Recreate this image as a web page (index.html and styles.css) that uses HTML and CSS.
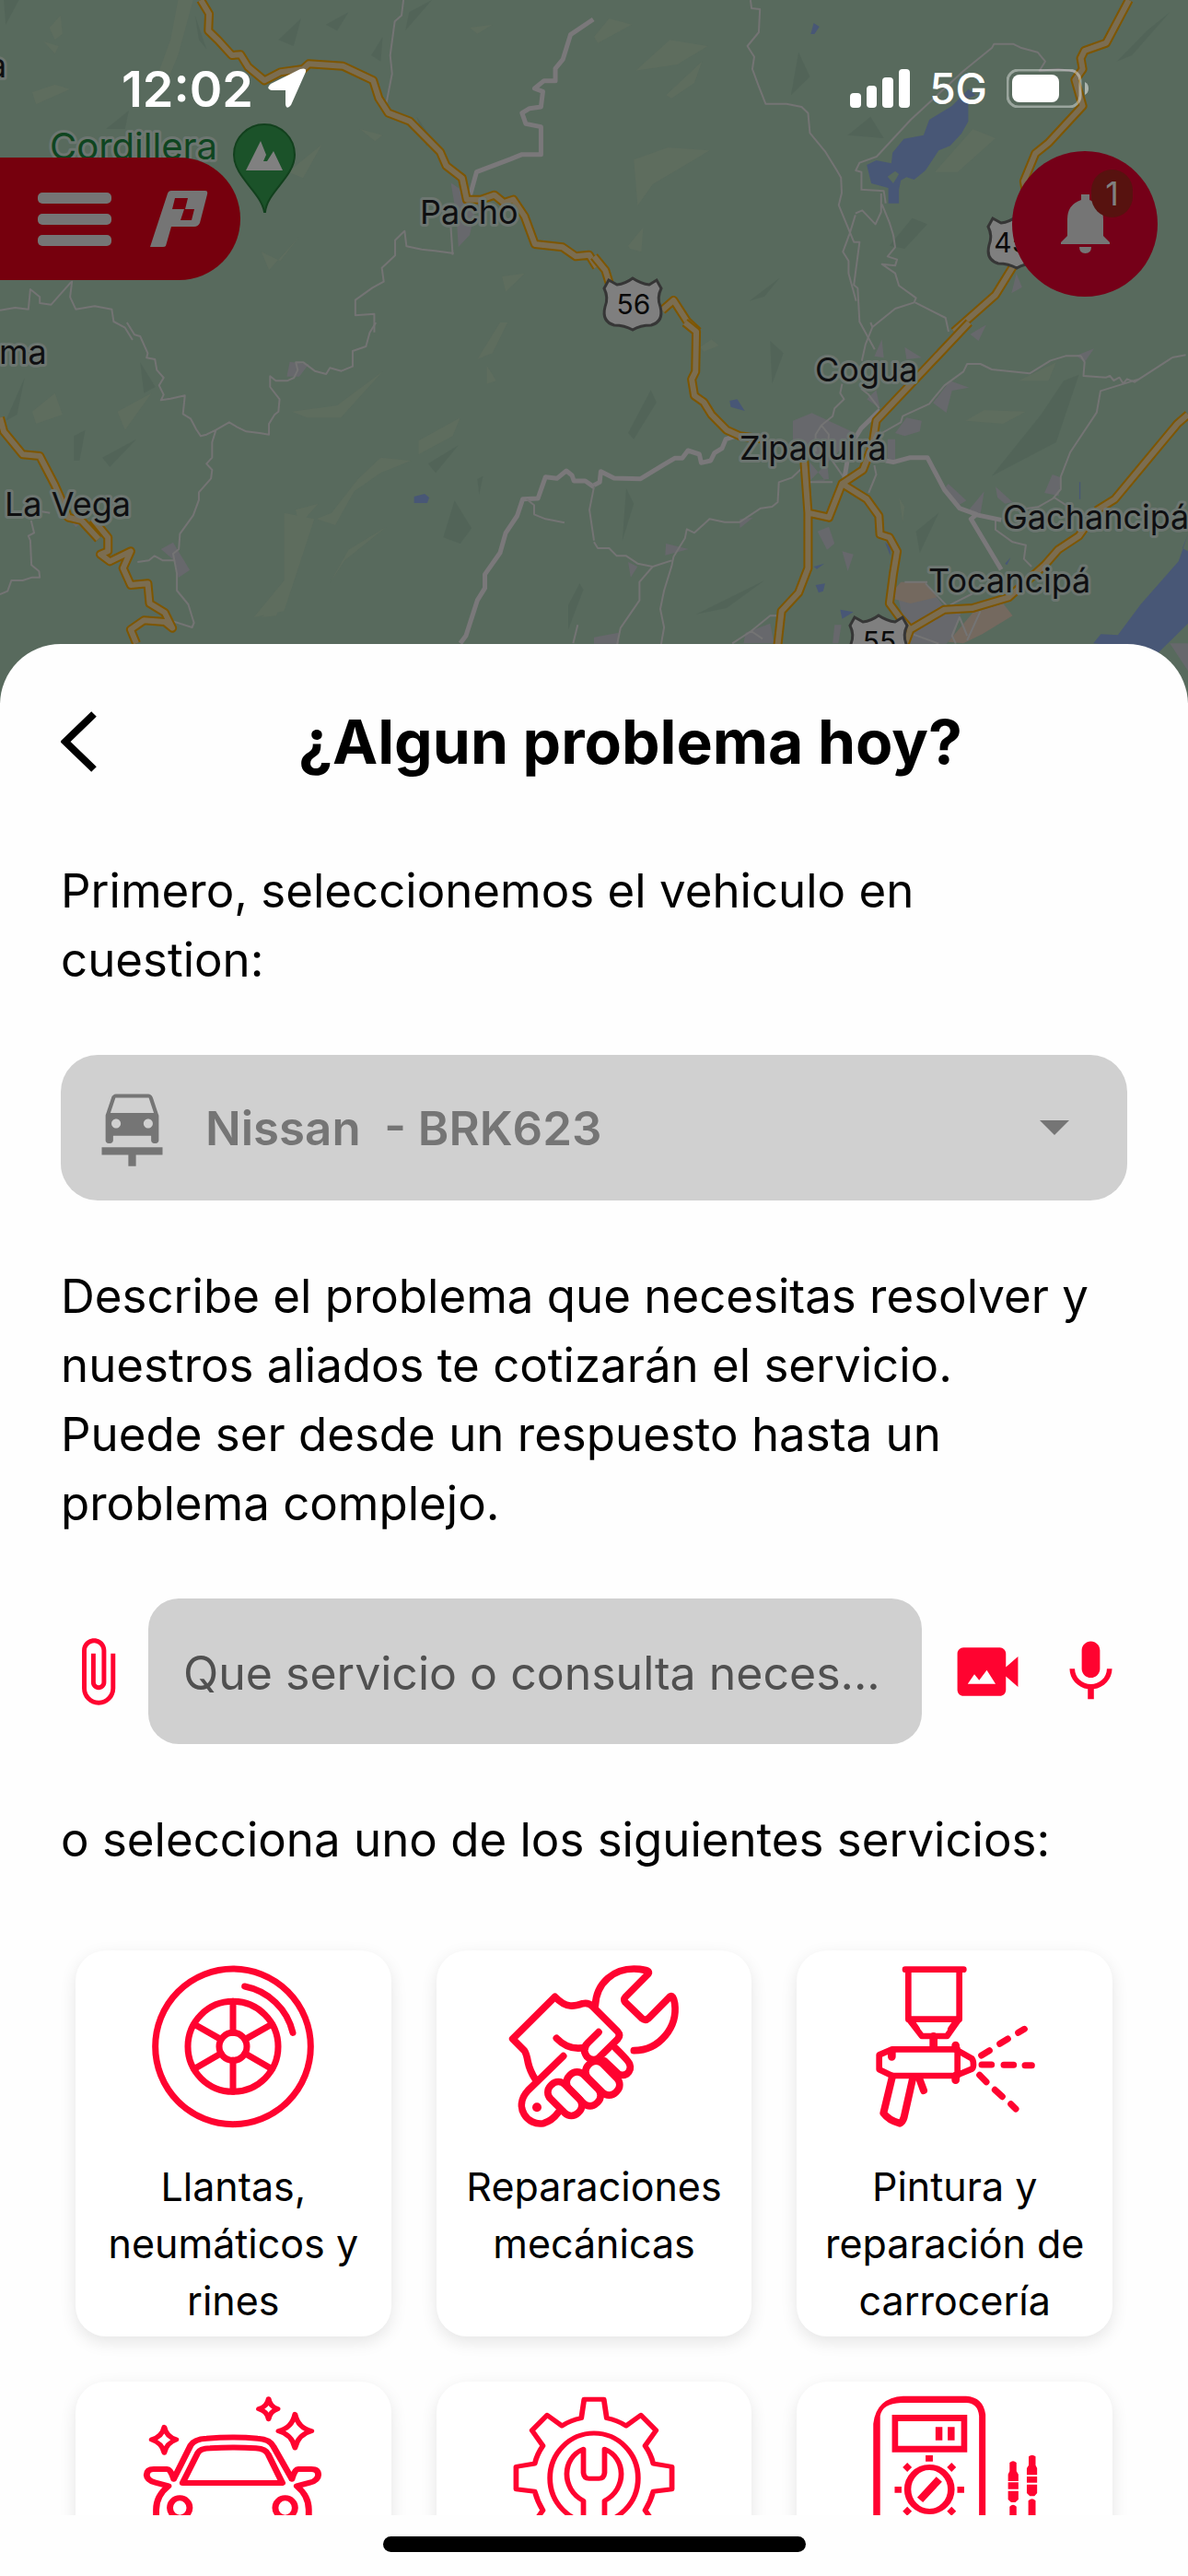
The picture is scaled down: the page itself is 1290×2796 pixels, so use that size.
FILE: index.html
```html
<!DOCTYPE html>
<html lang="es">
<head>
<meta charset="utf-8">
<meta name="viewport" content="width=device-width, initial-scale=1">
<title>¿Algun problema hoy?</title>
<link rel="stylesheet" href="styles.css">
</head>
<body>
<div class="app">
  <header class="hero">
    <svg class="map" viewBox="0 0 1290 765" preserveAspectRatio="xMidYMin slice" aria-hidden="true">
      <rect class="land" width="1290" height="765"/>
      <!-- north-west -->
      <g transform="scale(.41135 .33333)">
        <path class="hill-light" d="M470 0h40l-40 180-20 60-30-10 30-100zM115 135l40 15-10 25zM130 90l30-40 5 60-20 20zM85 300l60-25 40 15-90 50zM1325 900l60-10-50 60zM1240 90l60-10-40 30zM760 560l90-90-50 110zM690 820l50 30 50-80-80 110zM950 420l60 20-20 20z"/>
        <path class="hill-dark" d="M10 0h40l-35 80zM515 50l30 110-20-30zM735 130l60-70-20 90zM980 180l30-60-5 80zM1080 40l60-40-70 100zM1100 380l50 90-25 5zM280 420l60-60-10 60zM860 80l60-40-30 60z"/>
        <path class="town" d="M1190 595l70 60-20 110-30 40-5-100z"/>
        <path class="minor" d="M1065 0l-5 50-18 20-12 110 5 60-15 95M0 1010l40-8 35 5 5-65 25 25v20l30 5 50-70 5-5-5 50 15 40 50-10 45 10 5 40 30 20 20 40M1195 830l-5-90M1198 825l-50-8-35-5-40-10-5-50-25 30v50l-35 40 5 45-30 20-45 40v50l50-5v60"/>
        <path class="major" d="M1240 640l18-80 90-42 30-15 50 0v-90l-40-10-10-35 20-15 30-5 5-50-22-10 25-25h30v-40l20-30 20-80 60-50"/>
        <path class="hw" d="M530 0l22 45-2 55 25 30 37 50 23-2 20 40 43 44 42-27 60-10 15-17 90 7 80 47 15 58 25 48 57 27 80 100 16 45 42 40 12 70 38 0 35-15 25 25 25-10 30 55 27 90 73 10 35 30 35-5 20 40"/>
        <path class="hw-in" d="M530 0l22 45-2 55 25 30 37 50 23-2 20 40 43 44 42-27 60-10 15-17 90 7 80 47 15 58 25 48 57 27 80 100 16 45 42 40 12 70 38 0 35-15 25 25 25-10 30 55 27 90 73 10 35 30 35-5 20 40"/>
      </g>
      <!-- north-east -->
      <g transform="translate(645 0) scale(.41135 .33333)">
        <path class="hill-light" d="M190 310l95-110-20 70-60 50zM105 520l90-40 110 10-150 110-40 70zM90 800l40-60-5 80-30-10zM0 120l40-60 60 20-90 60zM900 560l100-140 60 30-100 110zM110 230l90-100 100 20-80 60z"/>
        <path class="hill-dark" d="M540 170l30 80-50 60zM670 440l60-60 35 70zM410 980l80-75-40 60zM780 800l60-90 40 20-60 80zM1380 200l80-100 60-60-100 140z"/>
        <path class="water" d="M580 75l15 12-13 24h-10zM988 290l20 20-20 10v75l-18 40-30 40-30 15-35 65-30 30-20-8-15 10-5 30v45h-28v-50l-45-15-12-60 25-15 40 10 3-35 30-45 52-12 15-50 60-45 40-50z"/>
        <path class="land" d="M775 575l20-18 10 10-15 30z"/>
        <path class="minor" d="M413 0l3 27 22 3-3 75-30 45 18 35-5 40 15 50 20 63h55l40 10 17 20 5 65 40 60 30 60 12 25 2 50-8 40 20 60 20 60 15 0-15 140 10 10 5 110 40 90M706 620v-60l-15-5 10-25 45-20 90-120 140-160 75-75 5-12h50l20 12 45 15 20 30-15 30 50-5 50 10M770 662l-5-40-60-5M760 665l20 60 10 40 5 40-20 30 25 10-5 20-35-5 35 30 10 40 45 40-5 15-50 20-60 60M848 985l80 50 8 45M690 695l18-10 35 45 15-40v-60M690 700l-15 60-18 60 15 30 0 40 20 90"/>
        <path class="town" d="M1115 890l15 45-28 20zM1035 1058l-30 22h15z"/>
        <path class="hw" d="M0 835l30 45 20 80M180 1010l30-32 35 67 30 35M1412 0l-60 140-57 25-10 25 5 35-20 35 20 85-90 120-35 35-30 90 15 110-40 160-50 100-110 120"/>
        <path class="hw-in" d="M0 835l30 45 20 80M180 1010l30-32 35 67 30 35M1412 0l-60 140-57 25-10 25 5 35-20 35 20 85-90 120-35 35-30 90 15 110-40 160-50 100-110 120"/>
      </g>
      <!-- south-west -->
      <g transform="translate(0 350) scale(.41135 .33333)">
        <path class="hill-light" d="M85 290l60-60 20 70-70 30zM310 290l90-60-70 120zM770 290l120-20 120-110-110 150-90 0zM1105 385l110-75-20 60-90 60zM945 510l60-70 80 10-80 40-70 60-50 110-50-20 40-20zM780 610l60-20-50 70zM1285 140l25 50-25 10zM690 960l50-45-10 40zM1260 120l60-120h20l-40 100zM750 620l80 20-80 300-80 20 80-120zM870 850l50-110 100-75-110 110z"/>
        <path class="hill-dark" d="M195 370l30-20-15 100-15 0zM270 440l90-60-70 90zM1130 460l80-60-60 90zM1260 510l15-10-10 60zM1500 920l30-70 10 20-40 130zM1170 700l30-120 45 90-30 50zM370 130l40 80-30 20zM15 320l50-140-20 120z"/>
        <path class="town" d="M765 128l50 8-25 40-33 0zM425 738l32-22 44 90-30 25-10-55zM190 650l22 5-12 12z"/>
        <path class="water" d="M1093 567l28-9 12 12-5 18h-35z"/>
        <path class="minor" d="M335 0l20 40 15 5 20 55-3 15 22 5 5 35 18 25-12 25 12 30-7 18 25-5 38-10-5 60 20 15 15 35 12 22 15-5 25-15 35-25 20 15 25 15 35 5 25 5 0-35 15-30 10-10 3-40-25-40v-35l15 15h30l18-10 10-25-5-25 20 0 30 28 30 10 10-20 30 10 30-15v-50l35-15 10-45 15-30V0M570 350l-10 40v50l-15 20 15 20-3 28-32 45v25l-15 50-35 60-3 50-15 15 10 65 0 55 30 45 15 60-5 15-50-20v25M460 775l-30 0-22-15-15 15-30 5M0 885l20-10 10-35h30l25-10 20 0-2-20-20-20-3-80-5-15 15-10-8-40M82 610l50 10"/>
        <path class="major" d="M1215 1045l15-25 30-115 20-40v-45l40-70 15-65 30-55 15-55 40-2 20-70 30 5 25-25 15 15 5 18h30l23 20"/>
        <path class="minor" d="M1390 575l20 20v30l30 15 50 12M1568 535l-12 75 12 100M1525 985l-12 60"/>
        <path class="hw" d="M0 310l10 45 50 75 45 5 40 95 25 70 10 35 35 10 45 60M245 640l40 60v45l-20 10 25 23 55-33-20 55 20 55 45-5 5 65 40 30 20 50-20-20-55-5-35 30 15 45"/>
        <path class="hw-in" d="M0 310l10 45 50 75 45 5 40 95 25 70 10 35 35 10 45 60M245 640l40 60v45l-20 10 25 23 55-33-20 55 20 55 45-5 5 65 40 30 20 50-20-20-55-5-35 30 15 45"/>
      </g>
      <!-- south-east -->
      <g transform="translate(645 350) scale(.41135 .33333)">
        <path class="hill-light" d="M980 320l50-35 110 5-60 40zM1120 190l100-60-20 60zM280 80l30-25 20 20-40 20zM805 570l15 30-5 50z"/>
        <path class="hill-dark" d="M465 60l35 40-30 100zM150 220l15 40-60 120-15-20zM85 540l20 50-30 120zM270 950l180-110-100 90zM1180 300l60-110 40-20-60 220-170 110zM850 680l60-60-50 130z"/>
        <path class="town" d="M525 320l50-25 105 60-30 60-80 100 50-5-5-60-90-40zM820 80l45 35-40 5zM760 55l5 60-25-5zM1035 8l-20 52-22-22zM720 250l25-30 10 60zM895 262l45-72 50 22-45 10-15 72zM795 360l30-50 40 10-5 35-40 15zM775 380h20v80l-20-20zM1320 85l-25 45-22-22zM935 525l48 55-20 15-40-50zM1030 550l-10 75-30-15zM1060 535l45 50-20 5-20-20zM1210 495l22 10-5 60-38-10zM590 680l30-15 15 55-20 20zM655 745l30 10-15 55zM190 720l60 18-62 20zM385 640l35-5-35 35zM90 780l25 15-18 35zM570 455l40 60-40 0zM0 1025l65-15v36H0zM400 1010l65-30 10 65h-80zM635 985l18 0-8 60h-15zM800 880l75-35 45 75 50 20-20 80-20 26h-100zM1520 1045h48v90z"/>
        <path class="sand" d="M810 845h65l30 50-70 20-60-20zM1000 945l80-30 25 40-80 60-50 30-40-5z"/>
        <path class="water" d="M358 255l20-5 20 38-37-13zM580 795l28-10-20 18zM585 855l25-5-5 25-12 5zM650 935l35 8-30 22zM768 715l14 15v30zM1085 785l15-20-10 25zM1568 690l-15 45 15 10v235l-78 95-92-20-80-10 20-30 45 3 60-100 100-140zM1281 520h3v55h-3z"/>
        <path class="minor" d="M730 0l5 15-18 55-10 55M655 200l-5 30 10 20-25 30-5 25-30 30-15 30v55M705 215l20 20 28 45M600 335l20 30-5 60 50 90M760 360l50-35 5-20 70-40 40-60 50-45 10-25h35l30 18 100 13 55-42 40-15h40l10 20-3 45 60 5 10-5 10 15 15-10 10 20 10-15 20 10 100-80 35-8M1437 185l-100 38-10 70-70 130-25 80v40l-20 30-40 28-60 10M1215 570l50 40M740 465l5 30-20 60M553 470l-30 35-35 15-3 65-15 15-30 5-55 45h-40l-40-10-40 45-20-12-5 30-30 60-5 30-20 80-10 60 10 60-10 70M0 715l10 20h30l20 25h25l30 25 40 10-35 50v60l-50 90-10 60M155 795l50-20M485 955h-20l-50 50-50 40M415 1005l30 25M875 850l70 90M820 845h60M570 520h60M1060 640v35l45 40 35 10-5 45 20 25M830 1010l80 36M985 1020l-20-60-20 60 10 26M1020 940l-35 95M940 920l80-50"/>
        <path class="major" d="M0 530l15-10 3-35 35 22 70 2 60-45 30-22 20 0 15-25 30 12 5 28 25-7 10-25 20-15 10-30 25-10M755 285l-50 60-30 60-15 110M770 450l20 5 45-15h45l45 105 40 60 45 20-15 15 80 165M1005 625l70 18"/>
        <path class="hw" d="M240 0l30 30-2 130-10 25 7 53 25 22 20 40 40 50 35 20 65 10M990 0L745 320l-10 80-25 80-55 45-35 110-55-15M555 450l10 170v180l-25 80-45 60-10 110M655 525l65 50 32 55 3 60 25 10 20 45-10 75-10 95 30 50 25 35 90-65 75-5 95-35 95-105 35-50 55-45 50-85 45-35 165-245 28-30M835 1000l-15 50"/>
        <path class="hw-in" d="M240 0l30 30-2 130-10 25 7 53 25 22 20 40 40 50 35 20 65 10M990 0L745 320l-10 80-25 80-55 45-35 110-55-15M555 450l10 170v180l-25 80-45 60-10 110M655 525l65 50 32 55 3 60 25 10 20 45-10 75-10 95 30 50 25 35 90-65 75-5 95-35 95-105 35-50 55-45 50-85 45-35 165-245 28-30M835 1000l-15 50"/>
      </g>
      <!-- park pin -->
      <path d="M287 230C283 208 254 192 254 168a33 33 0 0 1 66 0c0 24-30 40-32 62z" fill="#1b5229" stroke="#12401d" stroke-width="2"/>
      <path d="M267 185l16-32 6 15-3 7h4l7-11 10 21z" fill="#808080"/>
      <!-- route shields -->
      <g class="shield">
        <path d="M661 304l9 5q9-1 17-7 9 6 18 7l8-5 5 9q-5 10-1 20 4 16-10 20-12 0-20 5-9-5-20-5-14-4-10-20 4-10-1-20z"/>
        <path d="M1078 237l9 5q9-1 17-7 9 6 18 7l8-5 5 9q-5 10-1 20 4 16-10 20-12 0-20 5-9-5-20-5-14-4-10-20 4-10-1-20z"/>
        <path d="M928 670l9 5q9-1 17-7 9 6 18 7l8-5 5 9q-5 10-1 20 4 16-10 20-12 0-20 5-9-5-20-5-14-4-10-20 4-10-1-20z"/>
      </g>
      <g class="route-no">
        <text x="688" y="341">56</text>
        <text x="1098" y="274">45</text>
        <text x="955" y="707">55</text>
      </g>
      <g class="place">
        <text x="-13" y="84">a</text>
        <text x="-1" y="395">ma</text>
        <text x="5" y="560">La Vega</text>
        <text x="456" y="243">Pacho</text>
        <text x="885" y="414">Cogua</text>
        <text x="803" y="499">Zipaquirá</text>
        <text x="1089" y="574">Gachancipá</text>
        <text x="1008" y="643">Tocancipá</text>
        <text class="park" x="54" y="173">Cordillera</text>
      </g>
    </svg>
    <div class="status">
      <div class="clock">
        <span>12:02</span>
        <svg width="44" height="44" viewBox="0 0 44 44" aria-hidden="true"><path d="M43 4L27 40Q22 46 21 39V24H6Q-1 22 5 17L37 1Q44-1 43 4z" fill="#fff"/></svg>
      </div>
      <div class="signals">
        <svg width="65" height="42" viewBox="0 0 65 42" fill="#fff" aria-hidden="true"><rect y="26" width="12" height="16" rx="4"/><rect x="18" y="18" width="11" height="24" rx="4"/><rect x="35" y="9" width="12" height="33" rx="4"/><rect x="53" width="12" height="42" rx="4"/></svg>
        <span>5G</span>
        <svg width="90" height="42" viewBox="0 0 90 42" aria-hidden="true"><rect x="1" y="1" width="79" height="40" rx="12" fill="none" stroke="#fff" stroke-opacity=".4" stroke-width="3"/><rect x="6" y="6" width="51" height="30" rx="8" fill="#fff"/><path d="M85 14q4 2 4 7t-4 7z" fill="#fff" opacity=".5"/></svg>
      </div>
    </div>
    <div class="toolbar">
      <button class="menu" type="button" aria-label="Menú">
        <svg width="80" height="58" viewBox="0 0 80 58" fill="#757575" aria-hidden="true"><rect width="80" height="12" rx="5"/><rect y="23" width="80" height="12" rx="5"/><rect y="46" width="80" height="12" rx="5"/></svg>
        <svg width="63" height="61" viewBox="0 0 63 61" aria-hidden="true"><path d="M19 3Q20 0 23 0H60Q63 0 62 4L54 35Q52 39 48 39H23L17 60Q16 61 14 61H0z" fill="#757575"/><path d="M27 8h14l-3 12h10l-3 12H33l4-12H24z" fill="#76000d"/></svg>
      </button>
      <button class="bell" type="button" aria-label="Notificaciones">
        <svg width="53" height="64" viewBox="0 0 53 64" fill="#757575" aria-hidden="true"><path d="M22 0h9v6q15 5 15 21v18l7 7v2H0v-2l7-7V27Q7 11 22 6zM20 57h13q0 7-6.500 7T20 57z"/></svg>
        <span class="badge">1</span>
      </button>
    </div>
  </header>

  <main class="sheet">
    <div class="title-row">
      <button class="back" type="button" aria-label="Atrás">
        <svg width="40" height="66" viewBox="0 0 40 66" aria-hidden="true"><path d="M36 3L5 33l31 30" fill="none" stroke="#000" stroke-width="8"/></svg>
      </button>
      <h1>¿Algun problema hoy?</h1>
    </div>

    <label class="copy" for="vehicle">Primero, seleccionemos el vehiculo en cuestion:</label>
    <div class="picker">
      <svg width="99" height="99" viewBox="0 0 24 24" fill="#757575" aria-hidden="true"><path fill-rule="evenodd" d="M16.220 12c.68 0 1.220-.54 1.220-1.220 0-.67-.54-1.220-1.220-1.220S15 10.110 15 10.780c0 .68.55 1.220 1.220 1.220zM6.560 10.780c0 .67.54 1.220 1.220 1.220S9 11.460 9 10.780c0-.67-.54-1.220-1.220-1.220s-1.220.55-1.220 1.220zM7.610 4L6.280 8h11.430l-1.330-4H7.610zM16.280 3s.54.01.92.54c.02.02.03.04.05.07.07.11.14.24.19.4.22.65 1.560 4.680 1.560 4.680v6.500c0 .45-.35.81-.78.81h-.44c-.43 0-.78-.36-.78-.81V14H7v1.190c0 .45-.35.81-.78.81h-.44c-.43 0-.78-.36-.78-.81v-6.500s1.340-4.020 1.550-4.690c.05-.16.12-.28.19-.4.03-.02.04-.04.06-.06C7.180 3.010 7.720 3 7.720 3h8.560zM4 17.010h16V19h-7v3h-2v-3H4v-1.990z"/></svg>
      <select id="vehicle">
        <option>Nissan &nbsp;- BRK623</option>
      </select>
      <svg class="caret" width="32" height="16" viewBox="0 0 32 16" aria-hidden="true"><path d="M0 0h32L16 16z" fill="#757575"/></svg>
    </div>

    <label class="copy" for="query">Describe el problema que necesitas resolver y nuestros aliados te cotizarán el servicio.<br>Puede ser desde un respuesto hasta un<br>problema complejo.</label>
    <div class="ask">
      <button class="tool" type="button" aria-label="Adjuntar archivo">
        <svg viewBox="0 0 24 24" aria-hidden="true"><path d="M16.500 6v11.500c0 2.210-1.790 4-4 4s-4-1.790-4-4V5c0-1.380 1.120-2.500 2.500-2.500s2.500 1.120 2.500 2.500v10.500c0 .55-.45 1-1 1s-1-.45-1-1V6H10v9.500c0 1.380 1.120 2.500 2.500 2.500s2.500-1.120 2.500-2.500V5c0-2.210-1.790-4-4-4S7 2.790 7 5v12.500c0 3.040 2.460 5.500 5.500 5.500s5.500-2.460 5.500-5.500V6h-1.500z"/></svg>
      </button>
      <input id="query" type="text" placeholder="Que servicio o consulta neces...">
      <div class="capture">
        <button class="tool" type="button" aria-label="Grabar video">
          <svg viewBox="0 0 24 24" aria-hidden="true"><path fill-rule="evenodd" d="M18 10.500V6c0-1.100-.9-2-2-2H4c-1.100 0-2 .9-2 2v12c0 1.100.9 2 2 2h12c1.100 0 2-.9 2-2v-4.500l4 3.500V7l-4 3.500zM5.400 16l2.200-3.200 1.600 2 2.500-3.300 2.900 4.500H5.400z"/></svg>
        </button>
        <button class="tool" type="button" aria-label="Grabar audio">
          <svg viewBox="0 0 24 24" aria-hidden="true"><path d="M12 14c1.660 0 3-1.340 3-3V5c0-1.660-1.340-3-3-3S9 3.340 9 5v6c0 1.660 1.340 3 3 3zm5.300-3c0 3-2.540 5.100-5.300 5.100S6.700 14 6.700 11H5c0 3.410 2.720 6.230 6 6.720V21h2v-3.280c3.280-.48 6-3.300 6-6.720h-1.700z"/></svg>
        </button>
      </div>
    </div>

    <p class="copy">o selecciona uno de los siguientes servicios:</p>

    <div class="services">
      <button class="card" type="button">
        <svg class="art" viewBox="280 130 600 528" aria-hidden="true">
          <g stroke-width="21"><circle cx="580" cy="395" r="253"/><circle cx="580" cy="395" r="147"/><circle cx="580" cy="395" r="45"/><path d="M580 248v102M580 440v102M453 322l88 50M619 417l88 51M707 322l-88 50M541 417l-88 51"/><path d="M618 199A200 200 0 0 1 775 350"/></g>
        </svg>
        <span>Llantas, neumáticos y rines</span>
      </button>
      <button class="card" type="button">
        <svg class="art" viewBox="255 130 600 528" aria-hidden="true">
          <g stroke-width="23"><path d="M559 262C562 190 618 134 704 143Q740 147 732 158L657 234Q650 242 657 251L712 304Q723 312 733 303L803 232Q813 226 818 255C828 330 770 408 685 408"/><path d="M548 262L632 346Q643 358 632 371L572 430Q552 448 532 428Q514 404 535 383L570 348"/><path d="M290 370L428 233C465 272 492 264 518 255Q536 251 548 262M433 368C462 398 494 405 526 398M290 370L328 408Q335 418 340 446 346 474 364 502M455 426L340 538C290 592 340 655 390 645Q418 638 440 608"/>
          <rect x="397" y="532" width="126" height="66" rx="30" transform="rotate(45 460 565)"/><rect x="458" y="500" width="126" height="66" rx="30" transform="rotate(45 521 533)"/><rect x="520" y="465" width="126" height="66" rx="30" transform="rotate(45 583 498)"/><path d="M590 442L632 482Q645 493 662 484 678 470 671 452 668 442 625 400"/></g><circle class="solid" cx="369" cy="593" r="15"/>
        </svg>
        <span>Reparaciones mecánicas</span>
      </button>
      <button class="card" type="button">
        <svg class="art" viewBox="290 130 600 528" aria-hidden="true">
          <g stroke-width="20"><path d="M428 144H618M438 150V304L482 361H564L604 304V150M438 306H604M448 312l18 26M594 312l-18 26" /><path d="M520 362v36" stroke-width="26"/><path d="M385 404H592L645 434Q650 440 650 454 650 464 645 468L592 490H385L343 470V422zM598 404v86"/><path d="M592 391v10M592 490v14M384 410v18" stroke-width="26"/><path d="M386 492L357 612Q375 636 410 645 420 640 424 625L452 500M474 500l14 38" stroke-width="24"/></g>
          <g stroke-width="21"><path d="M676 424l26-16M736 386l26-16M796 350l20-12M677 454h32M749 455h32M818 456h22M670 488l22 22M720 536l24 22M772 582l16 16"/></g>
        </svg>
        <span>Pintura y reparación de carrocería</span>
      </button>
      <button class="card" type="button" aria-label="Lavado">
        <svg class="art" viewBox="0 0 600 528" aria-hidden="true">
          <g transform="translate(300 0) scale(1.148 1) translate(-505 -126)" stroke-width="18">
            <path d="M606 134Q610 160 632 167 610 175 606 200 602 175 578 167 602 160 606 134zM681 184Q690 230 728 239 690 250 681 294 672 250 634 239 672 230 681 184zM310 226Q316 258 344 267 316 278 310 310 304 278 274 267 304 258 310 226z" stroke-width="15"/>
            <path d="M337 395L385 285Q395 265 430 263 505 256 575 263 610 265 620 290L672 395M362 408L405 310Q412 296 440 295 505 290 570 295 598 297 605 315L645 408zM337 395Q328 363 318 363H280Q261 363 260 382 261 400 285 407L322 418Q287 450 287 495V530M672 395Q680 363 690 363H727Q747 363 747 382 746 400 723 407L686 418Q720 450 720 495V530"/>
            <ellipse cx="354" cy="489" rx="28" ry="32"/><ellipse cx="653" cy="489" rx="28" ry="32"/>
          </g>
        </svg>
      </button>
      <button class="card" type="button" aria-label="Mantenimiento">
        <svg class="art" viewBox="0 0 600 528" aria-hidden="true">
          <g transform="translate(300 0) scale(1.148 1) translate(-1528 -126)" stroke-width="15">
            <path d="M1500 136H1556L1564 197Q1593 203 1619 222L1661 187 1704 237 1673 287Q1690 315 1696 345L1749 355V428L1696 436Q1688 470 1673 497L1704 547 1661 597 1619 562 1564 587 1556 648H1500L1492 587 1437 562 1395 597 1352 547 1383 497Q1368 470 1360 436L1307 428V355L1360 345Q1366 315 1383 287L1352 237 1395 187 1437 222Q1463 203 1492 197z"/>
            <ellipse cx="1528" cy="392" rx="125" ry="146"/>
            <path d="M1498 520V466C1434 428 1436 326 1498 298V375Q1500 394 1514 394H1542Q1556 394 1558 375V298C1620 326 1622 428 1558 466V520"/>
          </g>
        </svg>
      </button>
      <button class="card" type="button" aria-label="Diagnóstico">
        <svg class="art" viewBox="0 0 600 528" aria-hidden="true">
          <g transform="translate(300 0) scale(1.244 1) translate(-956 -126)">
            <path class="solid" fill-rule="evenodd" d="M742 540V215Q750 130 820 125H985Q1030 128 1036 185V540H1019V190Q1016 148 985 147H815Q765 150 760 190V540zM791 186H988V308H791zM807 207V287H972V207z"/>
            <path class="solid" d="M905 226h18v43h-18zM937 226h18v43h-18zM879 318h19v20h-19zM798 420h18v20h-18zM962 420h18v20h-18zM831 342l12 15-12 15-12-15zM947 342l12 15-12 15-12-15zM831 485l12 15-12 15-12-15zM947 485l12 15-12 15-12-15zM857 455l50-67 15 16-50 67zM1099 370V342q9-10 18 0V370l5 10V402h-27V380zM1095 406h27v22h-27zM1095 434h27v28l-8 9h-11l-8-9zM1099 540V485q9-12 18 0v55zM1149 350V322q9-10 18 0V350l4 10V382h-27V360zM1144 387h27v20h-27zM1144 413h27v28l-7 10h-12l-8-10zM1148 540V466q10-12 19 0v74z"/>
            <ellipse cx="889" cy="429" rx="57" ry="72" stroke-width="18"/>
          </g>
        </svg>
      </button>
    </div>
    <div class="home"></div>
  </main>
</div>
</body>
</html>
```
FILE: styles.css
```css
* { box-sizing: border-box; }

body {
  margin: 0;
  background: #fefefe;
  color: #000;
  font-family: Inter, "Liberation Sans", sans-serif;
}

button, select, input {
  margin: 0;
  padding: 0;
  border: 0;
  background: none;
  color: inherit;
  font: inherit;
}

svg { display: block; flex: none; }

.app {
  display: flex;
  flex-direction: column;
  height: 100vh;
}

/* Map header */
.hero {
  position: relative;
  flex: none;
  height: 765px;
  overflow: hidden;
}

.map {
  position: absolute;
  inset: 0;
  width: 100%;
  height: 100%;
}

.map path { vector-effect: non-scaling-stroke; }
.land { fill: #586a5d; }
.hill-light { fill: #64705f; opacity: .5; }
.hill-dark { fill: #506357; opacity: .7; }
.town { fill: #67686c; }
.sand { fill: #74695f; }
.water { fill: #485776; }
.minor, .major, .hw, .hw-in {
  fill: none;
  stroke: #747474;
  stroke-width: 2;
  stroke-linejoin: round;
}
.major { stroke: #7a787a; stroke-width: 5; }
.hw { stroke: #7e5600; stroke-width: 10; }
.hw-in { stroke: #7b6d51; stroke-width: 6; }

.shield path {
  fill: #7f7f7f;
  stroke: #363636;
  stroke-width: 3;
}

.route-no {
  font-size: 30px;
  text-anchor: middle;
  fill: #0a0a0a;
}

.place {
  font-size: 36px;
  font-weight: 400;
  fill: #0f0f11;
  stroke: #6d7671;
  stroke-width: 6px;
  stroke-linejoin: round;
  paint-order: stroke;
}
.park { fill: #0f4520; font-size: 40px; }

.status, .toolbar {
  position: relative;
  display: flex;
  justify-content: space-between;
}

.status {
  align-items: center;
  height: 164px;
  padding: 28px 107px 0 132px;
  color: #fff;
}

.clock, .signals {
  display: flex;
  align-items: center;
}
.clock { gap: 14px; font-size: 54px; font-weight: 600; }
.signals { gap: 21px; font-size: 46px; font-weight: 500; }

.menu {
  display: flex;
  align-items: center;
  gap: 42px;
  width: 261px;
  height: 133px;
  margin-top: 7px;
  padding-left: 41px;
  border-radius: 0 67px 67px 0;
  background: #76000d;
}

.bell {
  position: relative;
  display: flex;
  align-items: center;
  justify-content: center;
  width: 158px;
  height: 158px;
  margin-right: 33px;
  border-radius: 50%;
  background: #750018;
}

.badge {
  position: absolute;
  top: 20px;
  right: 27px;
  width: 45px;
  border-radius: 24px;
  background: #57120f;
  color: #808080;
  font-size: 36px;
  line-height: 52px;
}

/* Bottom sheet */
.sheet {
  position: relative;
  display: flex;
  flex: 1;
  flex-direction: column;
  min-height: 0;
  margin-top: -66px;
  padding: 66px 66px 26px;
  border-radius: 66px 66px 0 0;
  background: #fefefe;
}

.title-row {
  display: flex;
  align-items: center;
  height: 80px;
  margin-bottom: 84px;
}

.back { width: 79px; }

h1 {
  flex: 1;
  margin: 0;
  font-size: 66px;
  font-weight: 700;
  text-align: center;
}

.copy {
  display: block;
  margin: 0;
  font-size: 51px;
  line-height: 75px;
}

.picker, .ask {
  display: flex;
  align-items: center;
  margin: 66px 0;
}

.picker {
  position: relative;
  height: 158px;
  padding-left: 28px;
  border-radius: 40px;
  background: #d0d0d0;
}

.picker select {
  flex: 1;
  align-self: stretch;
  padding-left: 30px;
  appearance: none;
  color: #757575;
  font-size: 51px;
  font-weight: 600;
}

.caret {
  position: absolute;
  right: 63px;
  pointer-events: none;
}

.ask { gap: 16px; }

.ask input {
  flex: 1;
  min-width: 0;
  height: 158px;
  padding: 4px 16px 0 38px;
  border-radius: 33px;
  background: #d0d0d0;
  font-size: 50px;
}
.ask input::placeholder { color: #505050; opacity: 1; }

.capture {
  display: flex;
  gap: 33px;
  margin-left: 16px;
}

.tool { width: 79px; height: 79px; }
.tool svg { width: 100%; height: 100%; fill: #ff0330; }

.services {
  display: grid;
  flex: 1;
  grid-template-columns: repeat(3, 1fr);
  grid-auto-rows: 419px;
  gap: 49px;
  min-height: 0;
  padding: 83px 16px 0;
  overflow: hidden;
}

.card {
  display: flex;
  flex-direction: column;
  align-items: center;
  gap: 33px;
  padding: 16px;
  border-radius: 33px;
  background: #fff;
  box-shadow: 0 6px 18px rgba(0, 0, 0, .1);
  font-size: 43px;
  line-height: 62px;
}

.art {
  width: 200px;
  height: 176px;
  overflow: visible;
  fill: none;
  stroke: #ff0330;
  stroke-linecap: round;
  stroke-linejoin: round;
}
.solid { fill: #ff0330; stroke: none; }

.home {
  flex: none;
  width: 459px;
  height: 17px;
  margin: 23px auto 0;
  border-radius: 9px;
  background: #000;
}
```
